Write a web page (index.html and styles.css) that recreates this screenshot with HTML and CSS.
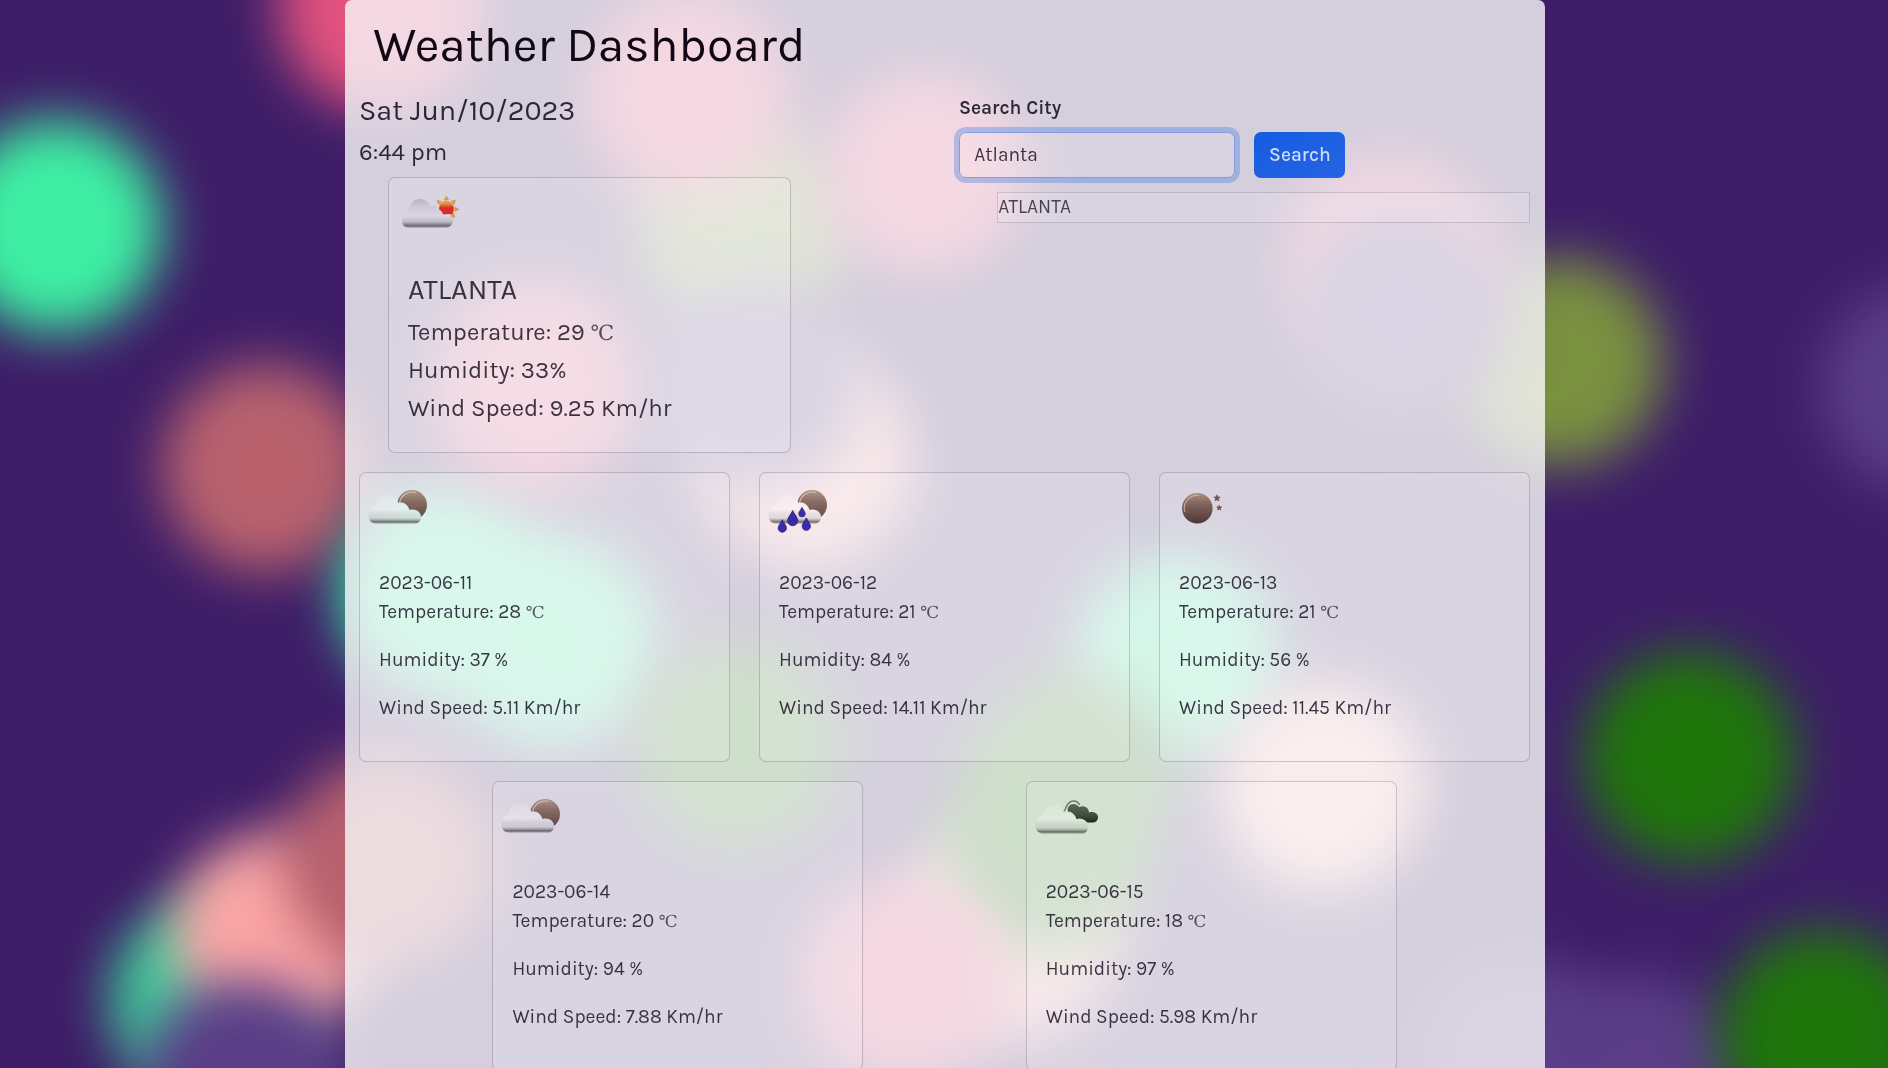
FILE: index.html
```html
<!DOCTYPE html>
<html lang="en">
<head>
<meta charset="utf-8">
<title>Weather Dashboard</title>
<link rel="stylesheet" href="styles.css">
</head>
<body>
<svg class="bubbles" viewBox="0 0 1888 1068" aria-hidden="true">
  <circle class="rose" cx="382" cy="8" r="104"/>
  <circle class="mint" cx="56" cy="226" r="106"/>
  <circle class="brick" cx="266" cy="468" r="104"/>
  <circle class="mint dim" cx="212" cy="1000" r="102"/>
  <circle class="peach" cx="275" cy="935" r="102"/>
  <circle class="brick" cx="388" cy="862" r="106"/>
  <circle class="violet" cx="245" cy="1086" r="106"/>
  <circle class="mint" cx="444" cy="592" r="104"/>
  <circle class="mint" cx="552" cy="640" r="106"/>
  <circle class="olive" cx="745" cy="225" r="104"/>
  <circle class="rose" cx="688" cy="95" r="104"/>
  <circle class="rose" cx="925" cy="172" r="102"/>
  <circle class="rose" cx="535" cy="385" r="104"/>
  <circle class="peach" cx="808" cy="460" r="106"/>
  <circle class="violet" cx="756" cy="385" r="104"/>
  <circle class="green" cx="738" cy="745" r="104"/>
  <circle class="peach" cx="1010" cy="930" r="108"/>
  <circle class="mint" cx="1178" cy="655" r="102"/>
  <circle class="green" cx="1070" cy="775" r="102"/>
  <circle class="green" cx="1042" cy="852" r="104"/>
  <circle class="rose" cx="905" cy="980" r="104"/>
  <circle class="blush" cx="1323" cy="787" r="104"/>
  <circle class="olive" cx="1560" cy="362" r="104"/>
  <circle class="rose" cx="1392" cy="264" r="108"/>
  <circle class="violet" cx="1402" cy="312" r="106"/>
  <circle class="violet" cx="1925" cy="388" r="104"/>
  <circle class="green" cx="1690" cy="757" r="106"/>
  <circle class="violet" cx="1520" cy="1060" r="104"/>
  <circle class="violet" cx="1640" cy="1080" r="104"/>
  <circle class="green" cx="1824" cy="1035" r="106"/>
</svg>

<svg class="defs" aria-hidden="true">
  <defs>
    <linearGradient id="cloudFill" x1="0" y1="0" x2="0" y2="1">
      <stop offset="0" stop-color="#fff" stop-opacity=".15"/>
      <stop offset=".5" stop-color="#fff" stop-opacity=".3"/>
      <stop offset=".8" stop-color="#777" stop-opacity=".15"/>
      <stop offset=".93" stop-color="#222" stop-opacity=".6"/>
      <stop offset="1" stop-color="#222" stop-opacity=".45"/>
    </linearGradient>
    <linearGradient id="greyCloud" x1="0" y1="0" x2="0" y2="1">
      <stop offset="0" stop-color="#b4b0bc"/>
      <stop offset=".25" stop-color="#cbc7d2"/>
      <stop offset=".6" stop-color="#dad6e1"/>
      <stop offset=".8" stop-color="#bcb7c4"/>
      <stop offset=".94" stop-color="#6a6470"/>
      <stop offset="1" stop-color="#8a8492"/>
    </linearGradient>
    <linearGradient id="moonFill" x1="0" y1="0" x2="0" y2="1">
      <stop offset="0" stop-color="#a98a7a"/>
      <stop offset=".35" stop-color="#7d5c50"/>
      <stop offset="1" stop-color="#42292a"/>
    </linearGradient>
    <linearGradient id="sunFill" x1="0" y1="0" x2="0" y2="1">
      <stop offset="0" stop-color="#e5ae62"/>
      <stop offset=".3" stop-color="#dc7a2c"/>
      <stop offset=".5" stop-color="#dc2214"/>
      <stop offset="1" stop-color="#e01420"/>
    </linearGradient>
    <linearGradient id="darkCloud" x1="0" y1="0" x2="0" y2="1">
      <stop offset="0" stop-color="#4f5f4c"/>
      <stop offset=".6" stop-color="#34452f"/>
      <stop offset="1" stop-color="#0a1c0a"/>
    </linearGradient>
    <path id="cloud" d="M16 50.500C10 50.500 8 45 8.500 41C9 36 12 33 16 32C17 25 23 21 29 22C34 23 37 26 38.500 30C43 28 48 32 49.500 37C55 35 62 39 61 45C60.500 48.500 58 50.500 55 50.500Z"/>
    <mask id="outsideCloud" maskUnits="userSpaceOnUse" x="0" y="0" width="80" height="77">
      <rect width="80" height="77" fill="#fff"/>
      <use href="#cloud" fill="#000"/>
    </mask>
    <g id="cloudyMoon">
      <g mask="url(#outsideCloud)">
        <circle cx="52" cy="32" r="15" fill="url(#moonFill)" opacity=".93"/>
        <path d="M39.500 30A13.200 13.200 0 0 1 56 19.500" fill="none" stroke="#e3d3cc" stroke-width="1.200" opacity=".7"/>
      </g>
      <use href="#cloud" fill="url(#cloudFill)"/>
    </g>
    <path id="drop" d="M0-6.500C1.500-3 4.400-.5 4.400 2.300A4.400 4.400 0 0 1-4.400 2.300C-4.400-.5-1.500-3 0-6.500Z"/>
    <path id="star" d="M0-3.500L1-1.100 3.500-1 1.600.7 2.200 3.200 0 1.900-2.200 3.200-1.600.7-3.500-1-1-1.100Z"/>
    <path id="ray" d="M0-13L2.700-8.500Q0-7.600-2.700-8.500Z"/>
  </defs>
</svg>

<main class="panel">
  <h1 class="title">Weather Dashboard</h1>
  <div class="top">
    <section class="now">
      <h2 class="date">Sat Jun/10/2023</h2>
      <h3 class="time">6:44 pm</h3>
      <article class="card current">
        <svg class="icon" viewBox="0 0 80 77">
          <g transform="translate(57.400 30.600)">
            <g fill="#d9953a">
              <use href="#ray"/>
              <use href="#ray" transform="rotate(47)"/>
              <use href="#ray" transform="rotate(94)"/>
              <use href="#ray" transform="rotate(137)"/>
              <use href="#ray" transform="rotate(-49)"/>
            </g>
            <path d="M-7-3A7.400 7.400 0 0 1 7.400 0C7.400 3 6.500 5 5.500 6L2 5.500L-3.500 6C-4 3-6 2-7.300 1Z" fill="url(#sunFill)"/>
          </g>
          <path d="M19 49.500C14 49.500 12.500 44.500 13 41C13.500 36.500 16.500 33.500 20 32C20.500 25 25 21 31 21C36 21 39.500 24 41.500 28.500C46 26.500 50.500 29 51.500 36C56 36.500 60 38 64 40C64.500 45 61.500 49.500 58 49.500Z" fill="url(#greyCloud)"/>
        </svg>
        <div class="card-body">
          <h4 class="city">ATLANTA</h4>
          <p>Temperature: 29 <span class="unit">℃</span></p>
          <p>Humidity: 33%</p>
          <p>Wind Speed: 9.25 Km/hr</p>
        </div>
      </article>
    </section>
    <section class="search">
      <label class="label" for="city">Search City</label>
      <div class="search-row">
        <input id="city" class="field" type="text" value="Atlanta">
        <button class="button" type="button">Search</button>
      </div>
      <ul class="history"><li>ATLANTA</li></ul>
    </section>
  </div>

  <div class="forecast">
    <article class="card day">
      <svg class="icon" viewBox="0 0 80 77"><use href="#cloudyMoon"/></svg>
      <div class="card-body">
        <h5>2023-06-11</h5>
        <p>Temperature: 28 <span class="unit">℃</span></p>
        <p>Humidity: 37 %</p>
        <p>Wind Speed: 5.11 Km/hr</p>
      </div>
    </article>
    <article class="card day">
      <svg class="icon" viewBox="0 0 80 77">
        <use href="#cloudyMoon"/>
        <g fill="#2a1aa6" stroke="#1c1668" stroke-width=".8">
          <use href="#drop" transform="translate(22.300 52.900) scale(.95)"/>
          <use href="#drop" transform="translate(32.700 45) scale(1.150)"/>
          <use href="#drop" transform="translate(42 39) scale(.75)"/>
          <use href="#drop" transform="translate(46.300 51) scale(.95)"/>
        </g>
      </svg>
      <div class="card-body">
        <h5>2023-06-12</h5>
        <p>Temperature: 21 <span class="unit">℃</span></p>
        <p>Humidity: 84 %</p>
        <p>Wind Speed: 14.11 Km/hr</p>
      </div>
    </article>
    <article class="card day">
      <svg class="icon" viewBox="0 0 80 77">
        <circle cx="37.300" cy="35.300" r="15.300" fill="url(#moonFill)"/>
        <path d="M24.800 39A13 13 0 0 1 39 22.500" fill="none" stroke="#d9b9ad" stroke-width="1.200" opacity=".75"/>
        <g fill="#6d4943" stroke="#6d4943" stroke-width=".8"><use href="#star" transform="translate(57 25) scale(.9)"/><use href="#star" transform="translate(59.200 34.700) scale(.75)"/></g>
      </svg>
      <div class="card-body">
        <h5>2023-06-13</h5>
        <p>Temperature: 21 <span class="unit">℃</span></p>
        <p>Humidity: 56 %</p>
        <p>Wind Speed: 11.45 Km/hr</p>
      </div>
    </article>
  </div>
  <div class="forecast later">
    <article class="card day">
      <svg class="icon" viewBox="0 0 80 77"><use href="#cloudyMoon"/></svg>
      <div class="card-body">
        <h5>2023-06-14</h5>
        <p>Temperature: 20 <span class="unit">℃</span></p>
        <p>Humidity: 94 %</p>
        <p>Wind Speed: 7.88 Km/hr</p>
      </div>
    </article>
    <article class="card day">
      <svg class="icon" viewBox="0 0 80 77">
        <path d="M36.500 29.500C39 29.500 38.500 19 46.500 19C50 19 51.500 20.500 52.500 23" fill="none" stroke="#5f7060" stroke-width="1.500"/>
        <g mask="url(#outsideCloud)">
          <path d="M41 30C39 22 48 19.500 52 25C57 22.500 62 26 62 30.500C67 29 71.500 32 71 36C70.500 39 68 40.500 66 40.500H47Z" fill="url(#darkCloud)"/>
        </g>
        <use href="#cloud" y="1" fill="url(#cloudFill)"/>
      </svg>
      <div class="card-body">
        <h5>2023-06-15</h5>
        <p>Temperature: 18 <span class="unit">℃</span></p>
        <p>Humidity: 97 %</p>
        <p>Wind Speed: 5.98 Km/hr</p>
      </div>
    </article>
  </div>
</main>
</body>
</html>
```

FILE: styles.css
```css
* { box-sizing: border-box; }
html, body { height: 100%; overflow: hidden; }
body {
  margin: 0;
  padding-left: 1px;
  background: #3e1e68;
  color: rgba(33, 31, 46, .95);
  font-family: Karla, Inter, "Noto Sans", sans-serif;
}
h1, h2, h3, h4, h5, p, ul { margin: 0; padding: 0; font-weight: 400; }

.bubbles { position: fixed; inset: 0; width: 100%; height: 100%; z-index: -1; }
.bubbles circle { filter: blur(26px); }
.rose { fill: #e2527e; }
.mint { fill: #3eefa3; }
.brick { fill: #b9626e; }
.peach { fill: #fca6a6; }
.blush { fill: #ffbab2; }
.violet { fill: #5b3d88; }
.olive { fill: #7a9140; }
.green { fill: #1f760b; }
.dim { opacity: .85; }
.defs { position: absolute; width: 0; height: 0; }

.panel {
  width: 1200px;
  height: 1068px;
  margin: 0 auto;
  overflow: hidden;
  border-radius: 7px 7px 0 0;
  background: rgba(248, 248, 249, .81);
}
.title {
  height: 91px;
  padding: 16.500px 0 0 28.800px;
  color: rgba(8, 0, 12, .96);
  font-size: 48px;
  line-height: 57.600px;
}
.top { display: grid; grid-template-columns: 1fr 1fr; height: 381px; }
.now { padding: 1.500px 14.400px 0; }
.date { height: 44.200px; font-size: 28.800px; line-height: 36px; }
.time { height: 40.300px; font-size: 24px; line-height: 31px; }
.card {
  border: 1px solid rgba(20, 5, 35, .19);
  border-radius: 7px;
  background: rgba(255, 255, 255, .12);
}
.icon { display: block; width: 80px; height: 77px; opacity: .92; }
.card-body { padding: 19.200px; color: rgba(33, 26, 42, .88); }
.unit { font-family: "DejaVu Serif", serif; font-size: .88em; line-height: 1; opacity: .85; }
.current { width: 403px; height: 276px; margin-left: 28.800px; }
.city { height: 43.800px; font-size: 28.800px; line-height: 32px; }
.current p { height: 38.200px; font-size: 24px; line-height: 28.800px; }

.search { padding: 0 14.400px; }
.label { display: block; height: 41px; font-size: 19.200px; font-weight: 600; line-height: 33px; }
.search-row { display: flex; gap: 19px; height: 46px; }
.field {
  width: 276px;
  padding: 0 14.400px 1px;
  border: 1px solid #7f9de0;
  border-radius: 7px;
  outline: none;
  background: rgba(255, 255, 255, .12);
  box-shadow: 0 0 0 5px rgba(70, 125, 225, .36);
  color: rgba(33, 26, 42, .88);
  font: 400 19.200px Karla, Inter, sans-serif;
}
.button {
  width: 91px;
  padding: 0 0 1px 1px;
  border: 0;
  border-radius: 7px;
  background: linear-gradient(150deg, #155ce0, #2664e4);
  color: #cfdcf8;
  font: 500 19.200px Karla, Inter, sans-serif;
}
.history { margin-top: 14px; padding-left: 38.400px; list-style: none; }
.history li {
  height: 31px;
  border: 1px solid rgba(20, 5, 35, .14);
  background: rgba(255, 255, 255, .12);
  color: rgba(33, 26, 42, .8);
  font-size: 19.200px;
  line-height: 28px;
}

.forecast { display: flex; gap: 28.800px; padding: 0 14.400px; }
.day { flex: none; width: 371.200px; height: 290px; }
.day h5, .day p { height: 28.800px; font-size: 19.200px; line-height: 28.800px; }
.day p { margin-bottom: 19.200px; }
.later { justify-content: space-evenly; gap: 0; margin-top: 19px; padding: 0; }
.later .day { margin: 0 14.400px; }
```
